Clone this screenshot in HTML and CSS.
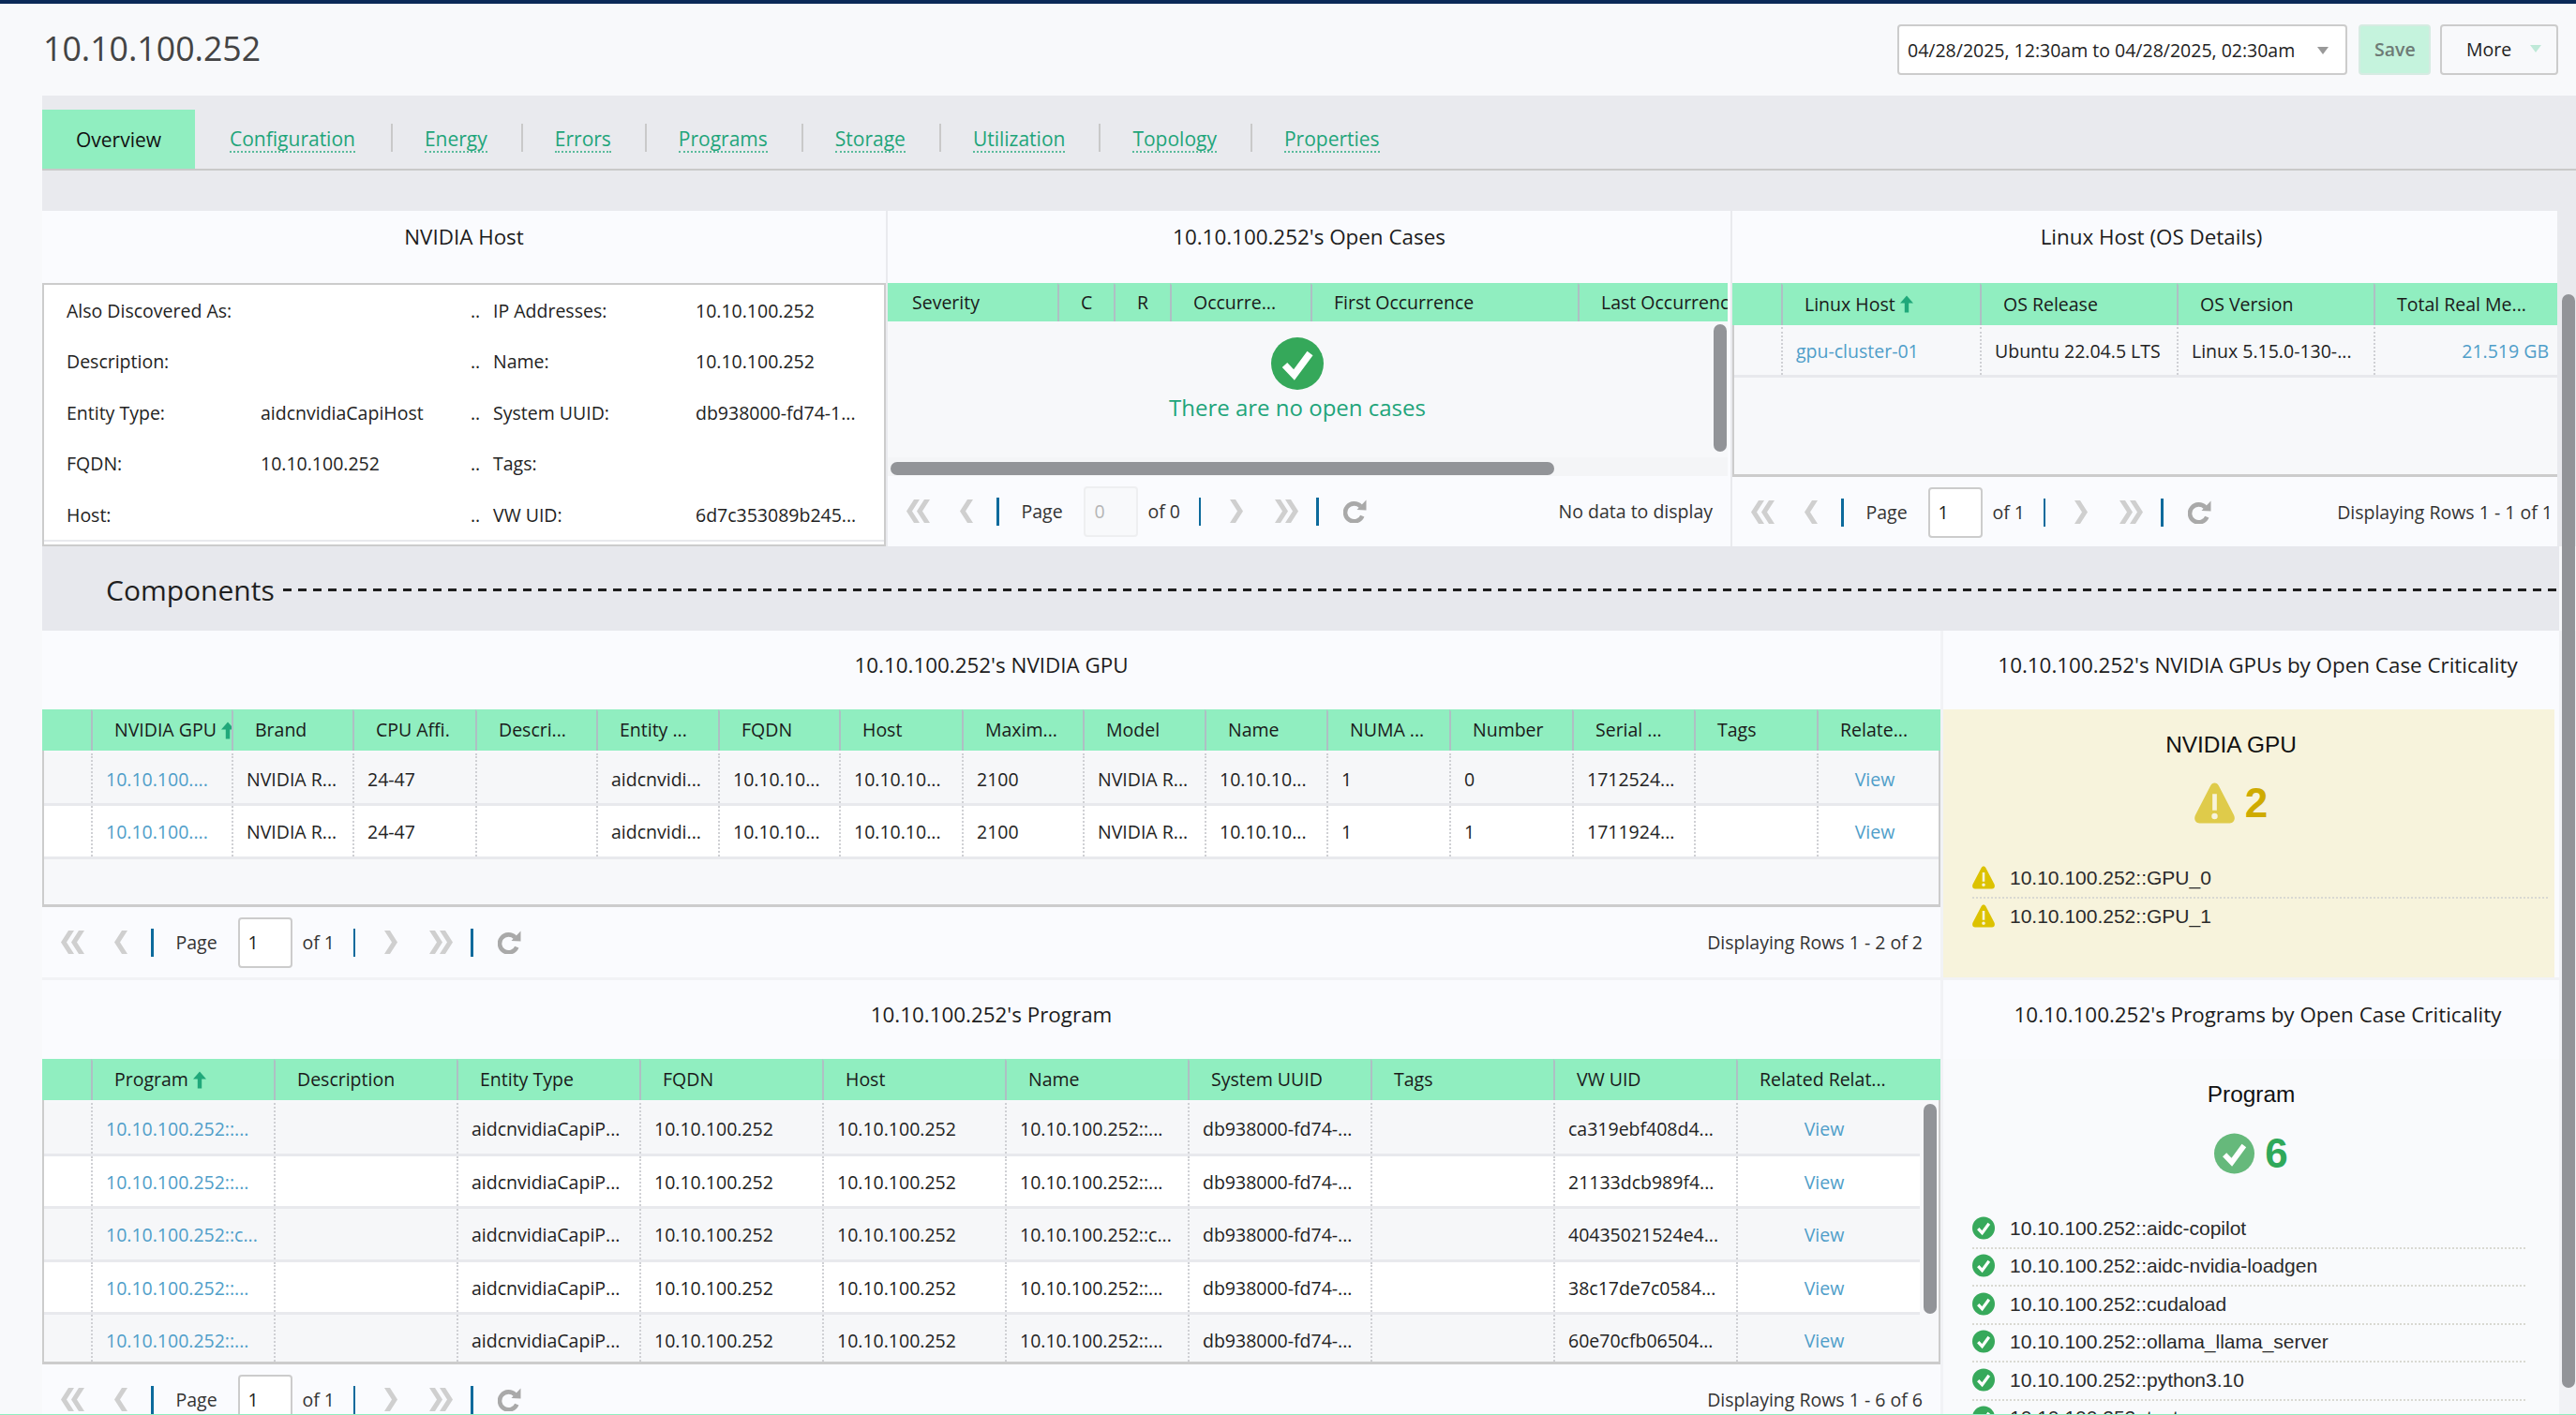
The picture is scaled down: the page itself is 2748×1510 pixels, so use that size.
FILE: index.html
```html
<!DOCTYPE html>
<html lang="en">
<head>
<meta charset="utf-8">
<title>10.10.100.252</title>
<link rel="stylesheet" href="styles.css">
</head>
<body>
<svg class="sprite" aria-hidden="true">
  <symbol id="i-first" viewBox="0 0 25 25"><path d="M8 0h6L6 12.5 14 25H8L0 12.5zM19 0h6l-8 12.5L25 25h-6l-8-12.5z"/></symbol>
  <symbol id="i-prev" viewBox="0 0 14 25"><path d="M8 0h6L6 12.5 14 25H8L0 12.5z"/></symbol>
  <symbol id="i-next" viewBox="0 0 14 25"><path d="M6 0H0l8 12.5L0 25h6l8-12.5z"/></symbol>
  <symbol id="i-last" viewBox="0 0 25 25"><path d="M6 0H0l8 12.5L0 25h6l8-12.5zM17 0h-6l8 12.5L11 25h6l8-12.5z"/></symbol>
  <symbol id="i-refresh" viewBox="0 0 25 25"><path class="i-stroke" d="M18.5 7.4A9.5 9.5 0 1 0 20.3 17.6"/><path d="M24.5.5v11l-10-.4z"/></symbol>
  <symbol id="i-sort" viewBox="0 0 14 18"><path d="M7 0l7 8H9.2v10H4.800V8H0z"/></symbol>
  <symbol id="i-warn" viewBox="0 0 44 44"><path d="M22 0c2 0 3.400 1 4.500 3L43 35c2 4.200.2 9-4.500 9h-33C.8 44-1 39.200 1 35L17.500 3C18.600 1 20 0 22 0zM19.600 12v18h4.800V12zM22 33a3.300 3.300 0 1 0 0 6.600 3.300 3.300 0 0 0 0-6.600z" fill-rule="evenodd"/></symbol>
  <symbol id="i-ok" viewBox="0 0 56 56"><circle cx="28" cy="28" r="28"/><path class="i-tick" d="M14.500 29.500 24.500 40 41.500 17"/></symbol>
</svg>

<div class="topbar"></div>

<main class="page">
  <header class="head">
    <h1 class="title">10.10.100.252</h1>
    <div class="range">04/28/2025, 12:30am to 04/28/2025, 02:30am<span class="caret caret-gray"></span></div>
    <button class="btn btn-save">Save</button>
    <button class="btn btn-more">More<span class="caret caret-mint"></span></button>
  </header>

  <nav class="tabs">
    <ul class="tablist">
      <li class="tab tab-active">Overview</li>
      <li class="tab tab-first"><a>Configuration</a></li>
      <li class="tab"><a>Energy</a></li>
      <li class="tab"><a>Errors</a></li>
      <li class="tab"><a>Programs</a></li>
      <li class="tab"><a>Storage</a></li>
      <li class="tab"><a>Utilization</a></li>
      <li class="tab"><a>Topology</a></li>
      <li class="tab tab-last"><a>Properties</a></li>
    </ul>
  </nav>

  <section class="row-top">
    <article class="panel">
      <h2 class="panel-title">NVIDIA Host</h2>
      <div class="props">
        <div class="props-grid">
          <span>Also Discovered As:</span><span></span><span>..</span><span>IP Addresses:</span><span>10.10.100.252</span>
          <span>Description:</span><span></span><span>..</span><span>Name:</span><span>10.10.100.252</span>
          <span>Entity Type:</span><span>aidcnvidiaCapiHost</span><span>..</span><span>System UUID:</span><span>db938000-fd74-1...</span>
          <span>FQDN:</span><span>10.10.100.252</span><span>..</span><span>Tags:</span><span></span>
          <span>Host:</span><span></span><span>..</span><span>VW UID:</span><span>6d7c353089b245...</span>
        </div>
      </div>
    </article>

    <article class="panel">
      <h2 class="panel-title">10.10.100.252's Open Cases</h2>
      <div class="th-row cases-cols">
        <span>Severity</span><span>C</span><span>R</span><span>Occurre...</span><span>First Occurrence</span><span>Last Occurrence</span>
      </div>
      <div class="empty">
        <svg class="empty-icon"><use href="#i-ok"/></svg>
        <p class="empty-text">There are no open cases</p>
        <div class="empty-track"></div>
        <div class="empty-vbar"></div>
        <div class="empty-hbar"></div>
      </div>
      <div class="pager">
        <svg class="pg-first"><use href="#i-first"/></svg><svg class="pg-prev"><use href="#i-prev"/></svg><i class="pg-sep pg-sep-a"></i>
        <span class="pg-label">Page</span><span class="pg-input pg-input-off">0</span><span class="pg-of">of 0</span><i class="pg-sep"></i>
        <svg class="pg-next"><use href="#i-next"/></svg><svg class="pg-last"><use href="#i-last"/></svg><i class="pg-sep pg-sep-c"></i><svg class="pg-refresh"><use href="#i-refresh"/></svg>
        <span class="pg-info">No data to display</span>
      </div>
    </article>

    <article class="panel">
      <h2 class="panel-title panel-title-side">Linux Host (OS Details)</h2>
      <div class="th-row linux-cols linux-head">
        <span></span><span>Linux Host <svg class="sort"><use href="#i-sort"/></svg></span><span>OS Release</span><span>OS Version</span><span>Total Real Me...</span>
      </div>
      <div class="tbody tbody-linux framed framed-open">
        <div class="tr tr-alt linux-cols">
          <span></span><span class="link">gpu-cluster-01</span><span>Ubuntu 22.04.5 LTS</span><span>Linux 5.15.0-130-...</span><span class="link num">21.519 GB</span>
        </div>
      </div>
      <div class="pager">
        <svg class="pg-first"><use href="#i-first"/></svg><svg class="pg-prev"><use href="#i-prev"/></svg><i class="pg-sep pg-sep-a"></i>
        <span class="pg-label">Page</span><span class="pg-input">1</span><span class="pg-of">of 1</span><i class="pg-sep"></i>
        <svg class="pg-next"><use href="#i-next"/></svg><svg class="pg-last"><use href="#i-last"/></svg><i class="pg-sep pg-sep-c"></i><svg class="pg-refresh"><use href="#i-refresh"/></svg>
        <span class="pg-info pg-info-tight">Displaying Rows 1 - 1 of 1</span>
      </div>
    </article>
  </section>

  <div class="components"><span>Components</span><i class="components-rule"></i></div>

  <section class="row-wide">
    <article class="panel">
      <h2 class="panel-title panel-title-tall">10.10.100.252's NVIDIA GPU</h2>
      <div class="th-row gpu-cols">
        <span></span><span>NVIDIA GPU <svg class="sort"><use href="#i-sort"/></svg></span><span>Brand</span><span>CPU Affi.</span><span>Descri...</span><span>Entity ...</span><span>FQDN</span><span>Host</span><span>Maxim...</span><span>Model</span><span>Name</span><span>NUMA ...</span><span>Number</span><span>Serial ...</span><span>Tags</span><span>Relate...</span>
      </div>
      <div class="tbody tbody-gpu framed">
        <div class="tr tr-alt gpu-cols">
          <span></span><span class="link">10.10.100....</span><span>NVIDIA R...</span><span>24-47</span><span></span><span>aidcnvidi...</span><span>10.10.10...</span><span>10.10.10...</span><span>2100</span><span>NVIDIA R...</span><span>10.10.10...</span><span>1</span><span>0</span><span>1712524...</span><span></span><span class="link view">View</span>
        </div>
        <div class="tr gpu-cols">
          <span></span><span class="link">10.10.100....</span><span>NVIDIA R...</span><span>24-47</span><span></span><span>aidcnvidi...</span><span>10.10.10...</span><span>10.10.10...</span><span>2100</span><span>NVIDIA R...</span><span>10.10.10...</span><span>1</span><span>1</span><span>1711924...</span><span></span><span class="link view">View</span>
        </div>
      </div>
      <div class="pager">
        <svg class="pg-first"><use href="#i-first"/></svg><svg class="pg-prev"><use href="#i-prev"/></svg><i class="pg-sep pg-sep-a"></i>
        <span class="pg-label">Page</span><span class="pg-input">1</span><span class="pg-of">of 1</span><i class="pg-sep"></i>
        <svg class="pg-next"><use href="#i-next"/></svg><svg class="pg-last"><use href="#i-last"/></svg><i class="pg-sep pg-sep-c"></i><svg class="pg-refresh"><use href="#i-refresh"/></svg>
        <span class="pg-info">Displaying Rows 1 - 2 of 2</span>
      </div>
    </article>

    <article class="panel">
      <h2 class="panel-title panel-title-tall panel-title-side">10.10.100.252's NVIDIA GPUs by Open Case Criticality</h2>
      <div class="rollup rollup-warn">
        <h3 class="rollup-title">NVIDIA GPU</h3>
        <div class="rollup-count"><svg class="rollup-icon"><use href="#i-warn"/></svg><b>2</b></div>
        <ul class="rollup-list">
          <li><svg class="li-icon"><use href="#i-warn"/></svg>10.10.100.252::GPU_0</li>
          <li><svg class="li-icon"><use href="#i-warn"/></svg>10.10.100.252::GPU_1</li>
        </ul>
      </div>
    </article>

    <article class="panel">
      <h2 class="panel-title panel-title-tall">10.10.100.252's Program</h2>
      <div class="th-row prog-head">
        <span></span><span>Program <svg class="sort"><use href="#i-sort"/></svg></span><span>Description</span><span>Entity Type</span><span>FQDN</span><span>Host</span><span>Name</span><span>System UUID</span><span>Tags</span><span>VW UID</span><span>Related Relat...</span>
      </div>
      <div class="tbody tbody-prog framed">
        <div class="tr tr-alt prog-cols"><span></span><span class="link">10.10.100.252::...</span><span></span><span>aidcnvidiaCapiP...</span><span>10.10.100.252</span><span>10.10.100.252</span><span>10.10.100.252::...</span><span>db938000-fd74-...</span><span></span><span>ca319ebf408d4...</span><span class="link view">View</span></div>
        <div class="tr prog-cols"><span></span><span class="link">10.10.100.252::...</span><span></span><span>aidcnvidiaCapiP...</span><span>10.10.100.252</span><span>10.10.100.252</span><span>10.10.100.252::...</span><span>db938000-fd74-...</span><span></span><span>21133dcb989f4...</span><span class="link view">View</span></div>
        <div class="tr tr-alt prog-cols"><span></span><span class="link">10.10.100.252::c...</span><span></span><span>aidcnvidiaCapiP...</span><span>10.10.100.252</span><span>10.10.100.252</span><span>10.10.100.252::c...</span><span>db938000-fd74-...</span><span></span><span>40435021524e4...</span><span class="link view">View</span></div>
        <div class="tr prog-cols"><span></span><span class="link">10.10.100.252::...</span><span></span><span>aidcnvidiaCapiP...</span><span>10.10.100.252</span><span>10.10.100.252</span><span>10.10.100.252::...</span><span>db938000-fd74-...</span><span></span><span>38c17de7c0584...</span><span class="link view">View</span></div>
        <div class="tr tr-alt prog-cols"><span></span><span class="link">10.10.100.252::...</span><span></span><span>aidcnvidiaCapiP...</span><span>10.10.100.252</span><span>10.10.100.252</span><span>10.10.100.252::...</span><span>db938000-fd74-...</span><span></span><span>60e70cfb06504...</span><span class="link view">View</span></div>
        <div class="prog-vbar"></div>
      </div>
      <div class="pager">
        <svg class="pg-first"><use href="#i-first"/></svg><svg class="pg-prev"><use href="#i-prev"/></svg><i class="pg-sep pg-sep-a"></i>
        <span class="pg-label">Page</span><span class="pg-input">1</span><span class="pg-of">of 1</span><i class="pg-sep"></i>
        <svg class="pg-next"><use href="#i-next"/></svg><svg class="pg-last"><use href="#i-last"/></svg><i class="pg-sep pg-sep-c"></i><svg class="pg-refresh"><use href="#i-refresh"/></svg>
        <span class="pg-info">Displaying Rows 1 - 6 of 6</span>
      </div>
    </article>

    <article class="panel">
      <h2 class="panel-title panel-title-tall panel-title-side">10.10.100.252's Programs by Open Case Criticality</h2>
      <div class="rollup rollup-ok">
        <h3 class="rollup-title">Program</h3>
        <div class="rollup-count"><svg class="rollup-icon"><use href="#i-ok"/></svg><b>6</b></div>
        <ul class="rollup-list">
          <li><svg class="li-icon"><use href="#i-ok"/></svg>10.10.100.252::aidc-copilot</li>
          <li><svg class="li-icon"><use href="#i-ok"/></svg>10.10.100.252::aidc-nvidia-loadgen</li>
          <li><svg class="li-icon"><use href="#i-ok"/></svg>10.10.100.252::cudaload</li>
          <li><svg class="li-icon"><use href="#i-ok"/></svg>10.10.100.252::ollama_llama_server</li>
          <li><svg class="li-icon"><use href="#i-ok"/></svg>10.10.100.252::python3.10</li>
          <li><svg class="li-icon"><use href="#i-ok"/></svg>10.10.100.252::test</li>
        </ul>
      </div>
    </article>
  </section>

  <div class="page-vbar"></div>
  <div class="page-edge"></div>
</main>
</body>
</html>
```

FILE: styles.css
```css
* { box-sizing: border-box; }
html, body { margin: 0; padding: 0; }
body {
  width: 2748px;
  height: 1510px;
  overflow: hidden;
  background: #f8f9fb;
  color: #222;
  font: 19.5px/1.3 "Open Sans", sans-serif;
}
h1, h2, h3, p, ul { margin: 0; padding: 0; font-weight: 400; }
ul { list-style: none; }
.sprite { display: none; }
.i-stroke { fill: none; stroke: currentColor; stroke-width: 4.6; }
.i-tick { fill: none; stroke: #fff; stroke-width: 7.500; }

.topbar { height: 4px; background: #0b2a58; }
.page { position: relative; height: 1506px; padding-left: 45px; overflow: hidden; }

/* header */
.head { display: flex; height: 98px; padding: 22px 19px 0 1px; align-items: flex-start; }
.title { flex: 1; font-size: 35.7px; line-height: 50px; color: #444; }
.range {
  position: relative; width: 480px; height: 54px; padding-left: 9px;
  background: #fff; border: 2px solid #ccc; border-radius: 4px;
  line-height: 51px; color: #222; white-space: nowrap;
}
.btn {
  position: relative; height: 54px; margin: 0 0 0 12px; padding: 0;
  border-radius: 4px; font: inherit; line-height: 46px; text-align: left;
}
.btn-save { width: 77px; padding-left: 15px; background: #c5f3dd; border: 2px solid #d6ebe2; color: #6e7b76; font-weight: 600; }
.btn-more { width: 126px; margin-left: 10px; padding-left: 26px; background: #f8f9fb; border: 2px solid #ccc; color: #222; }
.caret { position: absolute; width: 0; height: 0; border: 6px solid transparent; border-bottom: 0; border-top-width: 8px; }
.caret-gray { right: 18px; top: 22px; border-top-color: #999; }
.caret-mint { right: 16px; top: 20px; border-top-color: #bfe9d8; }

/* tabs */
.tabs { padding: 15px 0 43px; background: #e9eaee; }
.tablist { display: flex; height: 65px; align-items: flex-start; border-bottom: 2px solid #c9c9c9; }
.tab { margin-top: 15px; height: 30px; padding: 0 36px 0 34px; border-right: 2px solid #c9c9c9; font-size: 21px; line-height: 32px; white-space: nowrap; }
.tab a { display: block; height: 31px; color: #1fa57a; border-bottom: 2px dotted #59bb9b; }
.tab-active { margin: 0; width: 163px; height: 63px; padding: 0; border: 0; background: #90eec0; color: #111; text-align: center; line-height: 64px; }
.tab-first { padding: 0 38px 0 37px; }
.tab-last { border-right: 0; }

/* top row */
.row-top { display: grid; grid-template-columns: 900px 899px 880px; gap: 2px; height: 358px; background: #e9eaee; }
.panel { position: relative; background: #fafbfe; overflow: hidden; }
.panel-title { height: 77px; padding-top: 13px; font-size: 22.4px; line-height: 30px; text-align: center; color: #1c1c1c; white-space: nowrap; }
.panel-title-tall { height: 84px; padding-top: 22px; }
.panel-title-side { padding-left: 14px; }

.props { height: 281px; background: #fff; border: 2px solid #ccc; padding-bottom: 5px; }
.props-grid {
  display: grid; height: 274px; padding-left: 24px;
  grid-template-columns: 207px 224px 24px 216px 1fr;
  grid-auto-rows: 54.5px; align-items: center;
  border-bottom: 2px solid #e8e9ed; white-space: nowrap;
}

/* grids */
.th-row { display: grid; height: 44px; background: #90eec0; color: #1a1a1a; white-space: nowrap; }
.th-row > span { display: flex; align-items: center; padding: 0 0 2px 23px; border-left: 2px solid #aebfc4; border-top: 2px solid #90eec0; overflow: hidden; }
.th-row > span:first-child { padding-left: 26px; border-left: 0; }
.sort { flex: none; width: 14px; height: 19px; margin-left: 5px; color: #20a87a; fill: currentColor; }

.cases-cols { grid-template-columns: 181px 60px 60px 150px 285px 1fr; height: 41px; margin-right: 3px; }
.linux-cols { grid-template-columns: 52px 212px 210px 210px 1fr; }
.linux-head { height: 45px; }
.gpu-cols { grid-template-columns: 52px 150px 129px 131px 129px 130px 129px 131px 129px 130px 130px 131px 131px 130px 131px 132px; }
.prog-head { grid-template-columns: 52px repeat(9, 195px) 1fr; }
.prog-cols { grid-template-columns: 52px repeat(9, 195px) 196px; width: 2003px; }

.tbody { position: relative; background: #f7f8fa; overflow: hidden; }
.tbody-linux { height: 162px; padding-top: 2px; }
.tbody-gpu { height: 167px; padding-top: 2.5px; }
.tbody-prog { height: 282px; padding-top: 3px; }
.framed::after { content: ""; position: absolute; inset: 0; border: solid #ccc; border-width: 0 2px 3px; pointer-events: none; }
.framed-open::after { border-right-width: 0; }

.tr { display: grid; height: 56.5px; background: #fff; border-bottom: 3px solid #e8e9ed; white-space: nowrap; }
.tr-alt { background: #f6f7f9; }
.tbody-linux .tr { height: 54px; background: #f7f8fa; }
.tr > span { display: flex; align-items: center; padding: 2px 0 0 14px; border-left: 2px dotted #cfd0d4; overflow: hidden; color: #222; }
.tr > span:first-child { border-left: 0; }
.tbody-linux .tr > span { padding-top: 0; }
.tr > span.link { color: #4f9ec9; }
.tr > span.view { padding: 2px 10px 0 0; justify-content: center; }
.tbody-linux .tr > span.num { padding: 0 9px 0 0; justify-content: flex-end; }
.prog-vbar { position: absolute; left: 2007px; top: 4px; width: 14px; height: 224px; border-radius: 7px; background: #929498; }

/* empty state */
.empty { position: relative; height: 165px; padding: 17px 22px 0 0; background: #f7f8fa; text-align: center; overflow: hidden; margin-right: 3px; }
.empty-icon { display: block; width: 56px; height: 56px; margin: 0 auto; fill: #35a85a; }
.empty-text { margin-top: 3px; font-size: 24px; line-height: 32px; color: #1fa57a; }
.empty-track { position: absolute; left: 0; right: 0; bottom: 0; height: 20px; background: #f4f5f7; }
.empty-vbar { position: absolute; left: 881px; top: 3px; width: 14px; height: 136px; border-radius: 7px; background: #929498; }
.empty-hbar { position: absolute; left: 3px; bottom: 1px; width: 708px; height: 14px; border-radius: 7px; background: #929498; }

/* pager */
.pager { display: flex; height: 75px; padding-left: 20px; align-items: center; color: #333; white-space: nowrap; }
.pager svg { display: block; flex: none; height: 25px; fill: #cfcfcf; }
.pg-first, .pg-last { width: 25px; }
.pg-prev { width: 14px; margin-left: 32px; }
.pg-next { width: 14px; margin-left: 31px; }
.pg-last { margin-left: 34px; }
.pg-sep { flex: none; display: block; width: 2.500px; height: 30px; background: #0c6a9c; }
.pg-sep-a { margin-left: 25px; }
.pg-sep-c { margin-left: 19px; }
.pg-label { flex: none; width: 42px; margin-left: 24px; }
.pg-input { flex: none; width: 58px; height: 54px; margin-left: 24px; padding-left: 9px; background: #fff; border: 2px solid #ccc; border-radius: 4px; line-height: 50px; color: #222; }
.pg-input-off { padding-left: 10px; background: #f8f9fb; border-color: #eeeff1; color: #b5b5b5; }
.pg-of { flex: none; width: 54px; margin-left: 11px; }
.pager .pg-refresh { width: 25px; margin-left: 26px; color: #a9a9a9; fill: #a9a9a9; }
.pg-info { margin: 0 19px 0 auto; }
.pg-info-tight { margin-right: 5px; }

/* components */
.components { display: flex; height: 90px; margin-right: 18px; padding: 3px 0 0 68px; align-items: center; background: #e7e8ed; font-size: 30px; color: #1f1f1f; }
.components-rule { flex: 1; margin-left: 9px; height: 3.500px; background: repeating-linear-gradient(90deg, #1f1f1f 0 9px, transparent 9px 16px); }

/* lower rows */
.row-wide { display: grid; grid-template-columns: 2025px 657px; grid-template-rows: 370px 480px; gap: 3px; background: #f1f2f5; }
.rollup { height: 286px; }
.rollup-warn { margin-right: 5px; background: #f7f3dc; }
.rollup-ok { padding-left: 5px; background: #f9fafc; height: 396px; }
.rollup-title { padding-top: 18px; height: 58px; font-family: "Liberation Sans", Arial, sans-serif; font-size: 24.4px; line-height: 40px; text-align: center; color: #111; }
.rollup-warn .rollup-title, .rollup-warn .rollup-count { padding-right: 38px; }
.rollup-ok .rollup-title, .rollup-ok .rollup-count { padding-right: 5px; }
.rollup-count { display: flex; height: 44px; margin-top: 20px; gap: 11px; align-items: center; justify-content: center; font-family: "Liberation Sans", Arial, sans-serif; }
.rollup-ok .rollup-count { margin-top: 21px; }
.rollup-icon { flex: none; width: 43px; height: 44px; }
.rollup-count b { font-size: 44px; line-height: 44px; }
.rollup-warn .rollup-icon { fill: #dfcb4a; }
.rollup-warn .rollup-count b { color: #cfab00; }
.rollup-ok .rollup-icon { fill: #66b97b; }
.rollup-ok .rollup-count b { color: #2fa95a; }
.rollup-list { margin: 39px 7px 0 31px; font-family: "Liberation Sans", Arial, sans-serif; font-size: 21px; color: #2a2a2a; }
.rollup-ok .rollup-list { margin: 39px 36px 0 26px; }
.rollup-list li { display: flex; height: 40.500px; align-items: center; gap: 16px; padding-bottom: 2px; border-bottom: 2px dotted #d9d9d2; white-space: nowrap; }
.rollup-warn .rollup-list li:last-child { border-bottom: 0; }
.li-icon { flex: none; width: 24px; height: 25px; }
.rollup-warn .li-icon { fill: #dcc200; }
.rollup-ok .li-icon { fill: #37a95b; }

/* window chrome */
.page-vbar { position: absolute; left: 2733px; top: 310px; width: 14px; height: 1167px; border-radius: 7px; background: #929498; }
.page-edge { position: absolute; left: 0; right: 0; bottom: 0; height: 1.500px; background: #90eec0; }
```
